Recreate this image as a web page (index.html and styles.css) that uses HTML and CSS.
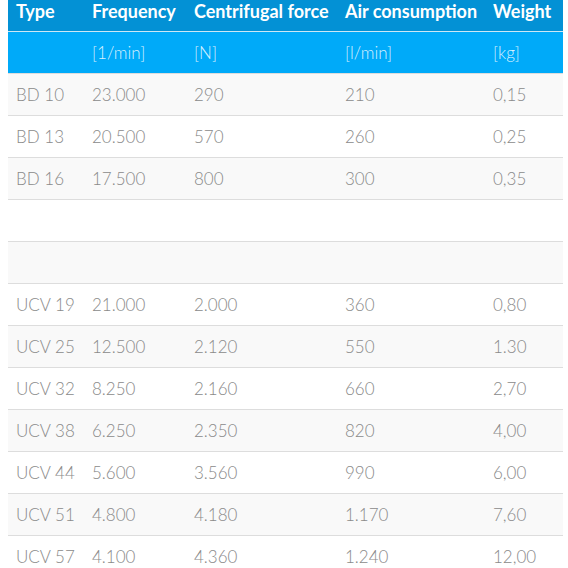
FILE: index.html
```html
<!DOCTYPE html>
<html>
<head>
<meta charset="utf-8">
<link rel="stylesheet" href="styles.css">
</head>
<body>
<table class="specs">
  <colgroup>
    <col class="c-type"><col class="c-freq"><col class="c-force"><col class="c-air"><col class="c-weight">
  </colgroup>
  <thead>
    <tr class="head">
      <th>Type</th><th>Frequency</th><th>Centrifugal force</th><th>Air consumption</th><th>Weight</th>
    </tr>
    <tr class="units">
      <th></th><th>[1/min]</th><th>[N]</th><th>[l/min]</th><th>[kg]</th>
    </tr>
  </thead>
  <tbody>
    <tr><td>BD 10</td><td>23.000</td><td>290</td><td>210</td><td>0,15</td></tr>
    <tr><td>BD 13</td><td>20.500</td><td>570</td><td>260</td><td>0,25</td></tr>
    <tr><td>BD 16</td><td>17.500</td><td>800</td><td>300</td><td>0,35</td></tr>
    <tr><td></td><td></td><td></td><td></td><td></td></tr>
    <tr><td></td><td></td><td></td><td></td><td></td></tr>
    <tr><td>UCV 19</td><td>21.000</td><td>2.000</td><td>360</td><td>0,80</td></tr>
    <tr><td>UCV 25</td><td>12.500</td><td>2.120</td><td>550</td><td>1.30</td></tr>
    <tr><td>UCV 32</td><td>8.250</td><td>2.160</td><td>660</td><td>2,70</td></tr>
    <tr><td>UCV 38</td><td>6.250</td><td>2.350</td><td>820</td><td>4,00</td></tr>
    <tr><td>UCV 44</td><td>5.600</td><td>3.560</td><td>990</td><td>6,00</td></tr>
    <tr><td>UCV 51</td><td>4.800</td><td>4.180</td><td>1.170</td><td>7,60</td></tr>
    <tr><td>UCV 57</td><td>4.100</td><td>4.360</td><td>1.240</td><td>12,00</td></tr>
  </tbody>
</table>
</body>
</html>
```

FILE: styles.css
```css
html, body {
  margin: 0;
  padding: 0;
  background: #ffffff;
}
body {
  padding: 0 5px 0 8px;
  overflow: hidden;
  font-family: Lato, "Open Sans", sans-serif;
}
.specs {
  width: 555px;
  margin-top: -10px;
  border-collapse: collapse;
  table-layout: fixed;
}
.c-type { width: 76px; }
.c-freq { width: 102px; }
.c-force { width: 151px; }
.c-air { width: 148px; }
.c-weight { width: 78px; }

.specs th,
.specs td {
  padding: 0 8px;
  text-align: left;
  white-space: nowrap;
  height: 41px;
  vertical-align: middle;
}
.head th {
  background: #0391d5;
  color: #ffffff;
  font-weight: 700;
  font-size: 18px;
  border-bottom: 1px solid #cde8f6;
}
.units th {
  background: #00aaf9;
  color: rgba(255, 255, 255, 0.85);
  font-weight: 300;
  font-size: 17px;
  border-bottom: 1px solid #dddddd;
}
.specs td {
  color: #8a8a8a;
  font-weight: 300;
  font-size: 17px;
  border-bottom: 1px solid #dddddd;
}
.specs tbody tr:nth-child(odd) td {
  background: #f9f9f9;
}
```
